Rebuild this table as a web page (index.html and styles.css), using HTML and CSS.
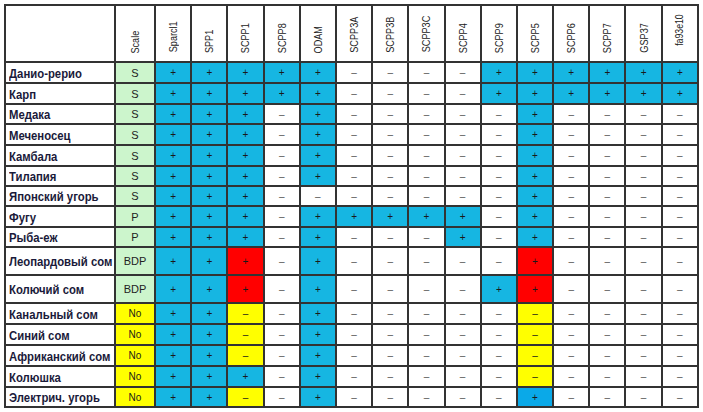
FILE: index.html
```html
<!DOCTYPE html>
<html lang="ru">
<head>
<meta charset="utf-8">
<title>SCPP</title>
<link rel="stylesheet" href="styles.css">
</head>
<body>
<div class="wrap">
<table class="grid">
<colgroup>
<col class="c-name"><col class="c-scale">
<col class="c-g"><col class="c-g"><col class="c-g"><col class="c-g"><col class="c-g"><col class="c-g"><col class="c-g"><col class="c-g"><col class="c-g"><col class="c-g"><col class="c-g"><col class="c-g"><col class="c-g"><col class="c-g"><col class="c-g">
</colgroup>
<thead>
<tr class="head">
<th></th>
<th><span class="vt">Scale</span></th>
<th><span class="vt">Sparcl1</span></th>
<th><span class="vt">SPP1</span></th>
<th><span class="vt">SCPP1</span></th>
<th><span class="vt">SCPP8</span></th>
<th><span class="vt">ODAM</span></th>
<th><span class="vt">SCPP3A</span></th>
<th><span class="vt">SCPP3B</span></th>
<th><span class="vt">SCPP3C</span></th>
<th><span class="vt">SCPP4</span></th>
<th><span class="vt">SCPP9</span></th>
<th><span class="vt">SCPP5</span></th>
<th><span class="vt">SCPP6</span></th>
<th><span class="vt">SCPP7</span></th>
<th><span class="vt">GSP37</span></th>
<th class="th-low"><span class="vt">fa93e10</span></th>
</tr>
</thead>
<tbody>
<tr class="r21">
<td class="name"><span class="nm">Данио-рерио</span></td><td class="sc g">S</td>
<td class="b">+</td><td class="b">+</td><td class="b">+</td><td class="b">+</td><td class="b">+</td>
<td class="m">–</td><td class="m">–</td><td class="m">–</td><td class="m">–</td>
<td class="b">+</td><td class="b">+</td><td class="b">+</td><td class="b">+</td><td class="b">+</td><td class="b">+</td>
</tr>
<tr class="r21">
<td class="name"><span class="nm">Карп</span></td><td class="sc g">S</td>
<td class="b">+</td><td class="b">+</td><td class="b">+</td><td class="b">+</td><td class="b">+</td>
<td class="m">–</td><td class="m">–</td><td class="m">–</td><td class="m">–</td>
<td class="b">+</td><td class="b">+</td><td class="b">+</td><td class="b">+</td><td class="b">+</td><td class="b">+</td>
</tr>
<tr class="r20">
<td class="name"><span class="nm">Медака</span></td><td class="sc g">S</td>
<td class="b">+</td><td class="b">+</td><td class="b">+</td><td class="m">–</td><td class="b">+</td>
<td class="m">–</td><td class="m">–</td><td class="m">–</td><td class="m">–</td>
<td class="m">–</td><td class="b">+</td><td class="m">–</td><td class="m">–</td><td class="m">–</td><td class="m">–</td>
</tr>
<tr class="r21">
<td class="name"><span class="nm">Меченосец</span></td><td class="sc g">S</td>
<td class="b">+</td><td class="b">+</td><td class="b">+</td><td class="m">–</td><td class="b">+</td>
<td class="m">–</td><td class="m">–</td><td class="m">–</td><td class="m">–</td>
<td class="m">–</td><td class="b">+</td><td class="m">–</td><td class="m">–</td><td class="m">–</td><td class="m">–</td>
</tr>
<tr class="r21">
<td class="name"><span class="nm">Камбала</span></td><td class="sc g">S</td>
<td class="b">+</td><td class="b">+</td><td class="b">+</td><td class="m">–</td><td class="b">+</td>
<td class="m">–</td><td class="m">–</td><td class="m">–</td><td class="m">–</td>
<td class="m">–</td><td class="b">+</td><td class="m">–</td><td class="m">–</td><td class="m">–</td><td class="m">–</td>
</tr>
<tr class="r20">
<td class="name"><span class="nm">Тилапия</span></td><td class="sc g">S</td>
<td class="b">+</td><td class="b">+</td><td class="b">+</td><td class="m">–</td><td class="b">+</td>
<td class="m">–</td><td class="m">–</td><td class="m">–</td><td class="m">–</td>
<td class="m">–</td><td class="b">+</td><td class="m">–</td><td class="m">–</td><td class="m">–</td><td class="m">–</td>
</tr>
<tr class="r20">
<td class="name"><span class="nm">Японский угорь</span></td><td class="sc g">S</td>
<td class="b">+</td><td class="b">+</td><td class="b">+</td><td class="m">–</td><td class="m">–</td>
<td class="m">–</td><td class="m">–</td><td class="m">–</td><td class="m">–</td>
<td class="m">–</td><td class="b">+</td><td class="m">–</td><td class="m">–</td><td class="m">–</td><td class="m">–</td>
</tr>
<tr class="r21">
<td class="name"><span class="nm">Фугу</span></td><td class="sc g">P</td>
<td class="b">+</td><td class="b">+</td><td class="b">+</td><td class="m">–</td><td class="b">+</td>
<td class="b">+</td><td class="b">+</td><td class="b">+</td><td class="b">+</td>
<td class="m">–</td><td class="b">+</td><td class="m">–</td><td class="m">–</td><td class="m">–</td><td class="m">–</td>
</tr>
<tr class="r20">
<td class="name"><span class="nm">Рыба-еж</span></td><td class="sc g">P</td>
<td class="b">+</td><td class="b">+</td><td class="b">+</td><td class="m">–</td><td class="b">+</td>
<td class="m">–</td><td class="m">–</td><td class="m">–</td><td class="b">+</td>
<td class="m">–</td><td class="b">+</td><td class="m">–</td><td class="m">–</td><td class="m">–</td><td class="m">–</td>
</tr>
<tr class="r28">
<td class="name"><span class="nm">Леопардовый сом</span></td><td class="sc g">BDP</td>
<td class="b">+</td><td class="b">+</td><td class="r">+</td><td class="m">–</td><td class="b">+</td>
<td class="m">–</td><td class="m">–</td><td class="m">–</td><td class="m">–</td>
<td class="m">–</td><td class="r">+</td><td class="m">–</td><td class="m">–</td><td class="m">–</td><td class="m">–</td>
</tr>
<tr class="r28">
<td class="name"><span class="nm">Колючий сом</span></td><td class="sc g">BDP</td>
<td class="b">+</td><td class="b">+</td><td class="r">+</td><td class="m">–</td><td class="b">+</td>
<td class="m">–</td><td class="m">–</td><td class="m">–</td><td class="m">–</td>
<td class="b">+</td><td class="r">+</td><td class="m">–</td><td class="m">–</td><td class="m">–</td><td class="m">–</td>
</tr>
<tr class="r21">
<td class="name"><span class="nm">Канальный сом</span></td><td class="sc y">No</td>
<td class="b">+</td><td class="b">+</td><td class="y">–</td><td class="m">–</td><td class="b">+</td>
<td class="m">–</td><td class="m">–</td><td class="m">–</td><td class="m">–</td>
<td class="m">–</td><td class="y">–</td><td class="m">–</td><td class="m">–</td><td class="m">–</td><td class="m">–</td>
</tr>
<tr class="r21">
<td class="name"><span class="nm">Синий сом</span></td><td class="sc y">No</td>
<td class="b">+</td><td class="b">+</td><td class="y">–</td><td class="m">–</td><td class="b">+</td>
<td class="m">–</td><td class="m">–</td><td class="m">–</td><td class="m">–</td>
<td class="m">–</td><td class="y">–</td><td class="m">–</td><td class="m">–</td><td class="m">–</td><td class="m">–</td>
</tr>
<tr class="r21">
<td class="name"><span class="nm">Африканский сом</span></td><td class="sc y">No</td>
<td class="b">+</td><td class="b">+</td><td class="y">–</td><td class="m">–</td><td class="b">+</td>
<td class="m">–</td><td class="m">–</td><td class="m">–</td><td class="m">–</td>
<td class="m">–</td><td class="y">–</td><td class="m">–</td><td class="m">–</td><td class="m">–</td><td class="m">–</td>
</tr>
<tr class="r21">
<td class="name"><span class="nm">Колюшка</span></td><td class="sc y">No</td>
<td class="b">+</td><td class="b">+</td><td class="b">+</td><td class="m">–</td><td class="b">+</td>
<td class="m">–</td><td class="m">–</td><td class="m">–</td><td class="m">–</td>
<td class="m">–</td><td class="y">–</td><td class="m">–</td><td class="m">–</td><td class="m">–</td><td class="m">–</td>
</tr>
<tr class="r20">
<td class="name"><span class="nm">Электрич. угорь</span></td><td class="sc y">No</td>
<td class="b">+</td><td class="b">+</td><td class="y">–</td><td class="m">–</td><td class="b">+</td>
<td class="m">–</td><td class="m">–</td><td class="m">–</td><td class="m">–</td>
<td class="m">–</td><td class="b2">+</td><td class="m">–</td><td class="m">–</td><td class="m">–</td><td class="m">–</td>
</tr>
</tbody>
</table>
</div>
</body>
</html>
```

FILE: styles.css
```css
html, body {
  margin: 0;
  padding: 0;
  background: #ffffff;
}
.wrap {
  padding: 4px 0 0 4px;
}
.grid {
  border-collapse: collapse;
  table-layout: fixed;
  width: 695px;
  border: 2px solid #3a3a3a;
  font-family: "Liberation Sans", Arial, sans-serif;
}
.c-name { width: 110px; }
.c-scale { width: 40px; }
.c-g { width: 36.2px; }
.grid th,
.grid td {
  border: 2px solid #333333;
  padding: 0;
  text-align: center;
  vertical-align: middle;
  background: #ffffff;
}
.head { height: 57px; }
.r20 { height: 20px; }
.r21 { height: 21px; }
.r28 { height: 28px; }
.grid th {
  vertical-align: bottom;
  padding-bottom: 4px;
  font-weight: normal;
  font-size: 10.5px;
  color: #222222;
}
.grid th.th-low {
  padding-bottom: 11px;
  font-size: 10px;
}
.vt {
  display: inline-block;
  writing-mode: vertical-rl;
  transform: scale(-1, -0.87);
  line-height: 12px;
  white-space: nowrap;
}
.grid td.name {
  text-align: left;
  padding-left: 3px;
  white-space: nowrap;
}
.nm {
  display: inline-block;
  font-weight: bold;
  font-size: 13.5px;
  line-height: 14px;
  color: #1a1a3a;
  transform: scaleX(0.84);
  transform-origin: left center;
}
.grid td.sc {
  font-size: 11px;
  color: #222222;
}
.grid td.b,
.grid td.r,
.grid td.m,
.grid td.y,
.grid td.b2 {
  font-size: 10px;
  color: #1a1a1a;
}
.grid td.m { color: #555555; }
.grid td.g { background: #ccf5cc; }
.grid td.b { background: #16b6e2; }
.grid td.b2 { background: #0aa9e8; }
.grid td.r { background: #ff0000; }
.grid td.y { background: #ffff00; }
```
